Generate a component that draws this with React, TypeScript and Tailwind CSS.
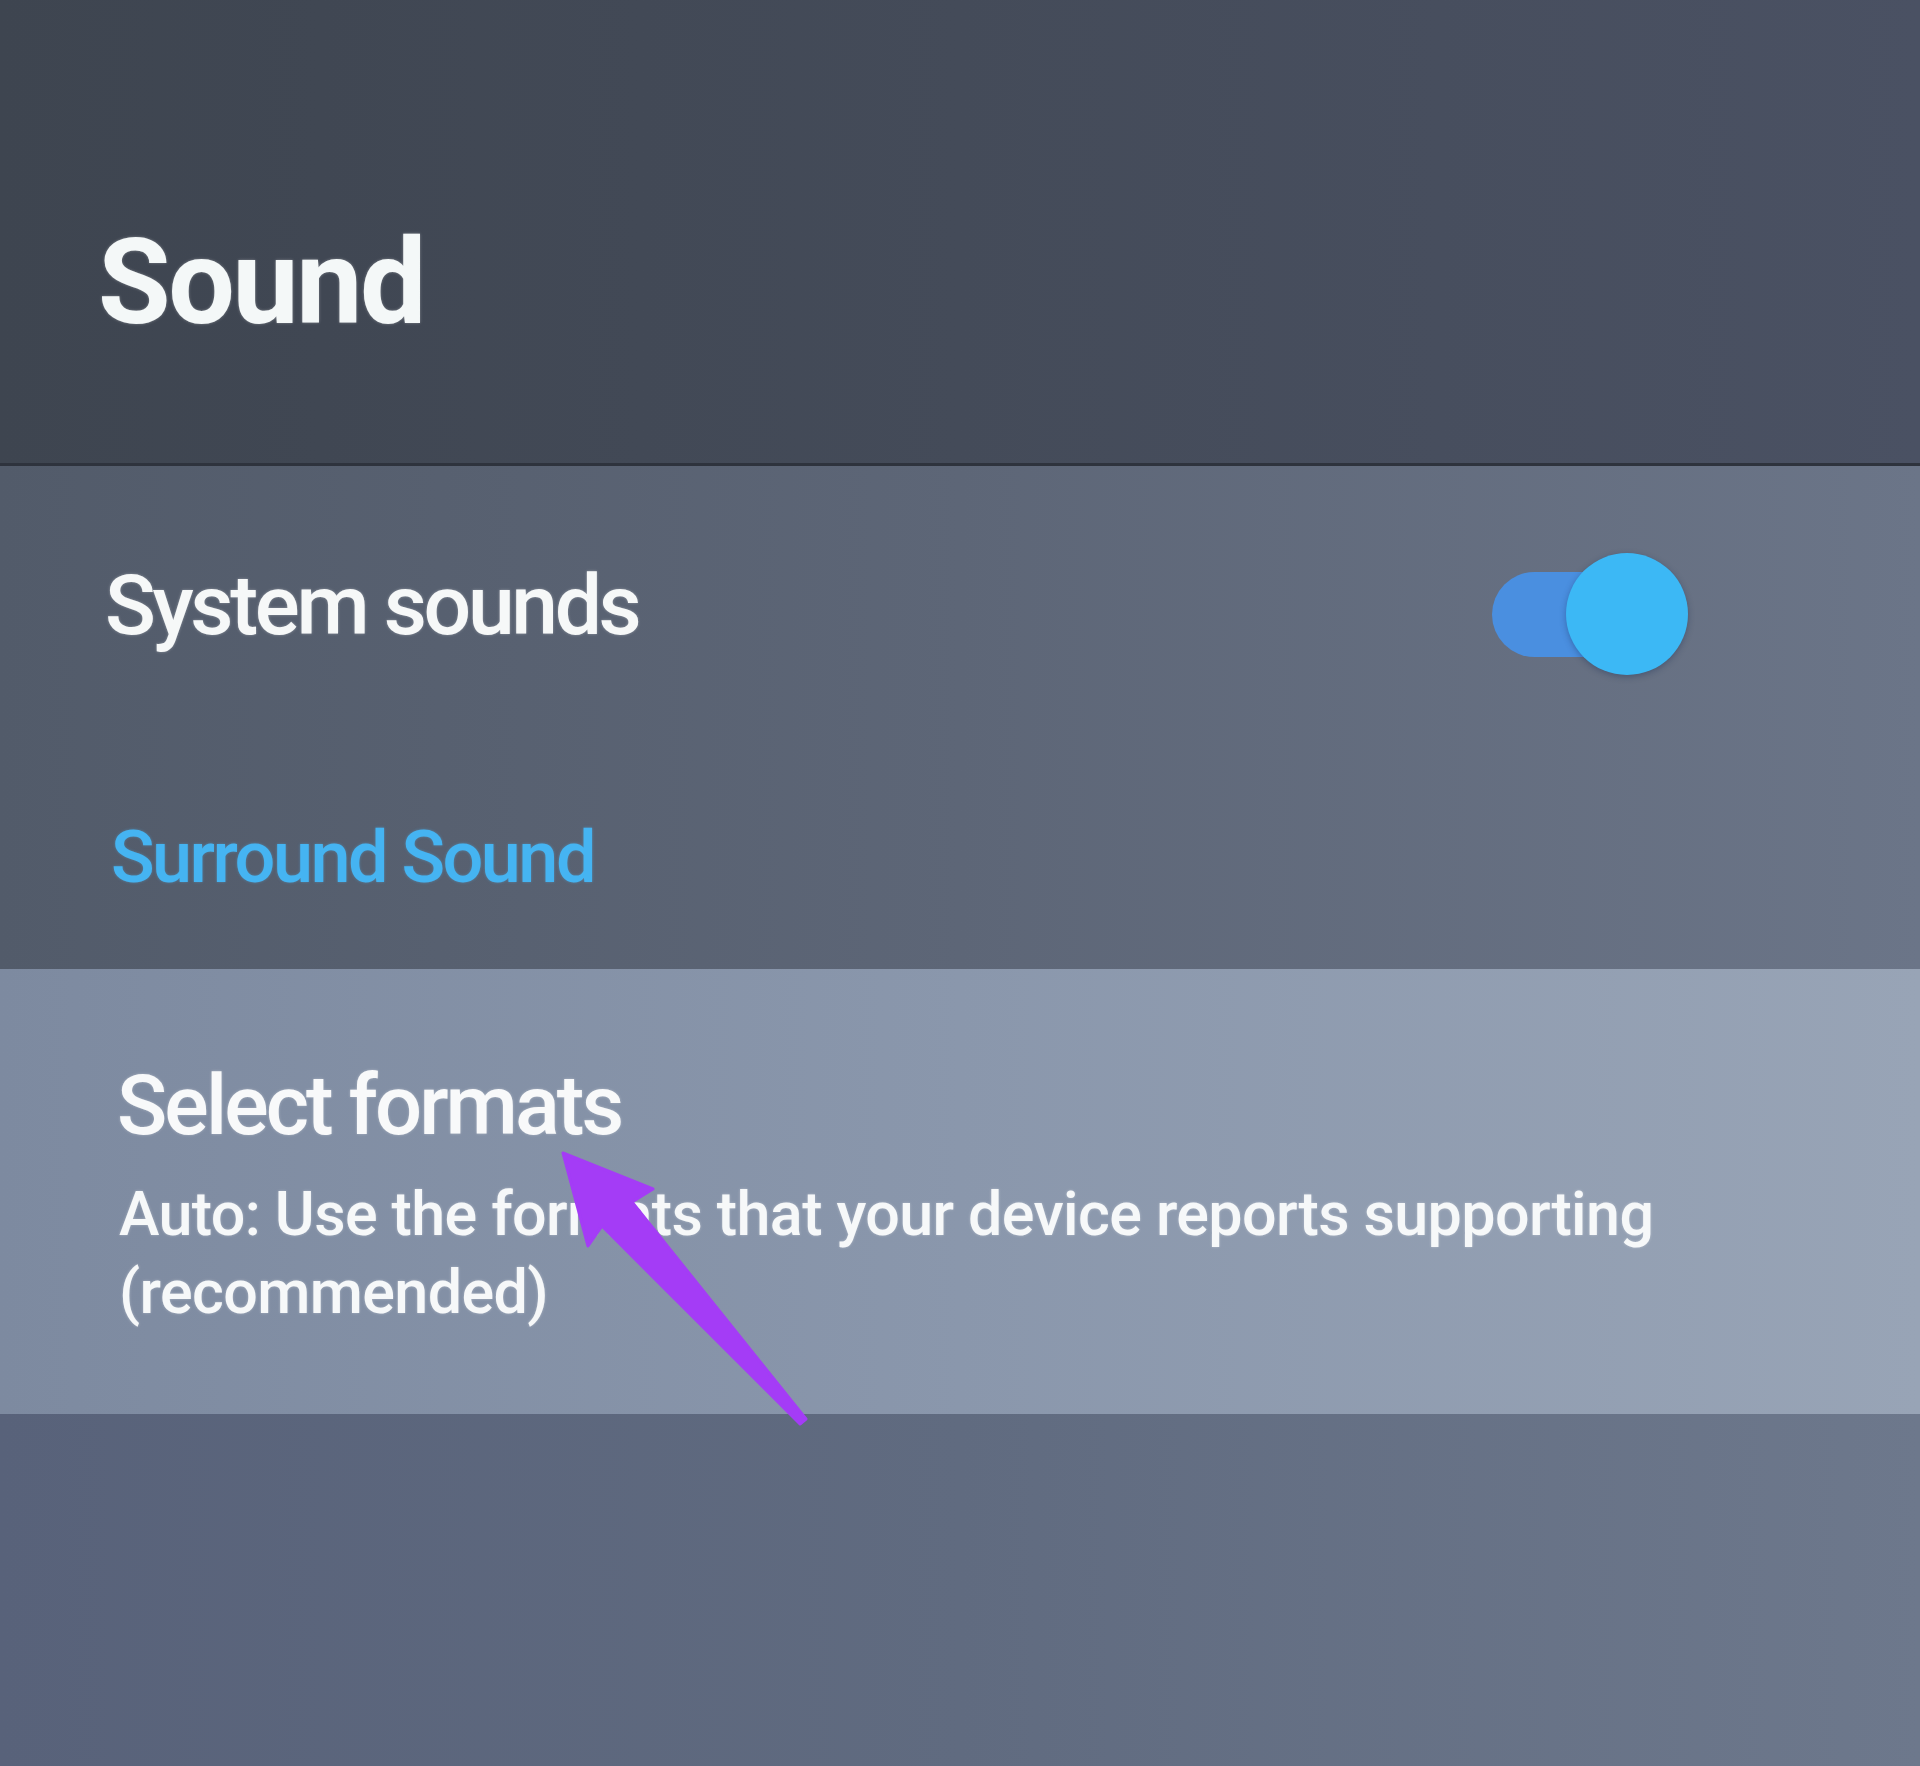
import React from "react";

function Toggle() {
  return (
    <div className="relative h-[122px] w-[196px] shrink-0">
      <div className="absolute left-0 top-[19px] h-[85px] w-[160px] rounded-full bg-[#4a8fe0]" />
      <div className="absolute right-0 top-0 h-[122px] w-[122px] rounded-full bg-[#3cb8f5] shadow-[0_2px_6px_rgba(20,40,80,0.35)]" />
    </div>
  );
}

export default function App() {
  return (
    <div className="relative flex h-[1766px] w-[1920px] flex-col overflow-hidden bg-[#5f697c] font-['Roboto','Noto_Sans',sans-serif] text-white">
      {/* Header */}
      <header className="h-[463px] shrink-0 bg-linear-to-r from-[#3e4550] via-[#444b59] to-[#4a5163] pl-[98px] pt-[224px]">
        <h1 className="text-[118px] font-bold leading-none tracking-[-0.02em] text-[#f4f8f8] [text-shadow:0_0_3px_rgba(255,255,255,0.35)]">
          Sound
        </h1>
      </header>
      <div className="h-[3px] shrink-0 bg-[#2e333d]" />

      {/* Main list */}
      <main className="flex flex-1 flex-col bg-linear-to-r from-[#525b6a] via-[#5d6677] to-[#6b7588]">
        <div className="box-content flex h-[111px] items-start justify-between pl-[105px] pr-[232px] pt-[98px]">
          <span className="text-[84px] font-medium leading-none tracking-[-0.04em] text-[#f6f8f8] [text-shadow:0_0_3px_rgba(255,255,255,0.35)]">
            System sounds
          </span>
          <div className="-mt-[11px]">
            <Toggle />
          </div>
        </div>

        <div className="pl-[111px] pt-[147px]">
          <span className="text-[72px] font-medium leading-none tracking-[-0.035em] text-[#45b4f2] [text-shadow:0_0_3px_rgba(80,190,255,0.4)]">
            Surround Sound
          </span>
        </div>

        <section className="mt-[75px] h-[445px] shrink-0 bg-linear-to-r from-[#7d8aa0] via-[#8a97ac] to-[#98a4b6] pl-[117px] pt-[95px]">
          <div className="text-[83px] font-medium leading-none tracking-[-0.035em] text-[#f8f9fa] [text-shadow:0_0_3px_rgba(255,255,255,0.35)]">
            Select formats
          </div>
          <p className="mt-[28px] pl-[2px] text-[61px] font-medium leading-[78px] tracking-[-0.01em] text-[#f6f8f9] [text-shadow:0_0_3px_rgba(255,255,255,0.35)]">
            Auto: Use the formats that your device reports supporting
            <br />
            (recommended)
          </p>
        </section>

        <div className="flex-1 bg-linear-to-r from-[#58627a] via-[#606b80] to-[#6d788c]" />
      </main>

      {/* Annotation arrow */}
      <svg
        className="pointer-events-none absolute left-0 top-0"
        width="1920"
        height="1766"
        viewBox="0 0 1920 1766"
      >
        <polygon
          points="563,1153 653,1189 632,1202 806,1419 800,1424 602,1226 588,1246"
          fill="#a43cf6"
          stroke="#a43cf6"
          strokeWidth="3"
          strokeLinejoin="round"
        />
      </svg>
    </div>
  );
}
